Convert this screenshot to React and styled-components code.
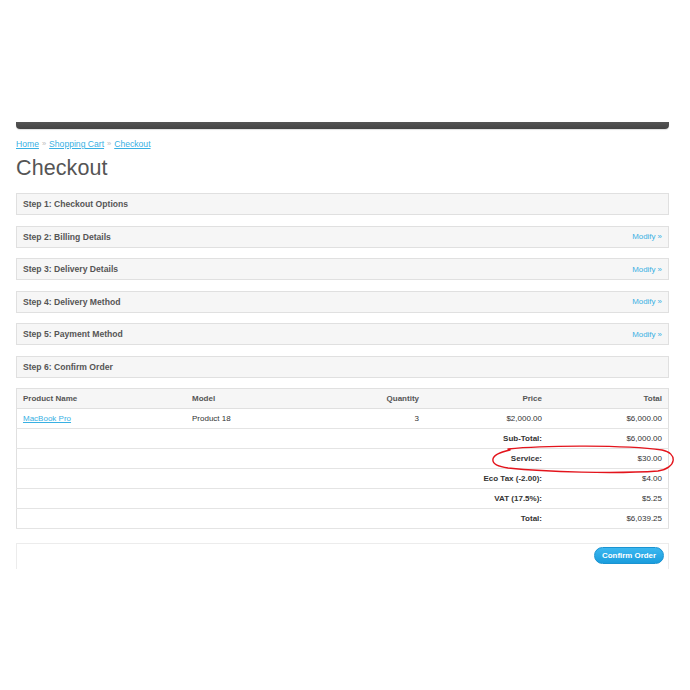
import styled, { createGlobalStyle } from "styled-components";

const GlobalStyle = createGlobalStyle`
  body {
    margin: 0;
    background: #fff;
    font-family: "Liberation Sans", Arial, sans-serif;
    color: #333;
  }
`;

const steps = [
  { title: "Step 1: Checkout Options", modify: false },
  { title: "Step 2: Billing Details", modify: true },
  { title: "Step 3: Delivery Details", modify: true },
  { title: "Step 4: Delivery Method", modify: true },
  { title: "Step 5: Payment Method", modify: true },
  { title: "Step 6: Confirm Order", modify: false },
];

const totals = [
  { label: "Sub-Total:", value: "$6,000.00" },
  { label: "Service:", value: "$30.00" },
  { label: "Eco Tax (-2.00):", value: "$4.00" },
  { label: "VAT (17.5%):", value: "$5.25" },
  { label: "Total:", value: "$6,039.25" },
];

function App() {
  return (
    <>
      <GlobalStyle />
      <Page>
        <TopBar />
        <Breadcrumb>
          <Crumb href="#">Home</Crumb>
          <Sep>»</Sep>
          <Crumb href="#">Shopping Cart</Crumb>
          <Sep>»</Sep>
          <Crumb href="#">Checkout</Crumb>
        </Breadcrumb>
        <Title>Checkout</Title>

        <Steps>
          {steps.map((s) => (
            <Step key={s.title}>
              <StepTitle>{s.title}</StepTitle>
              {s.modify && <Modify href="#">Modify »</Modify>}
            </Step>
          ))}
        </Steps>

        <TableWrap>
          <OrderTable>
            <thead>
              <tr>
                <Th $w={157}>Product Name</Th>
                <Th $w={158}>Model</Th>
                <Th $w={57} $right>Quantity</Th>
                <Th $w={111} $right>Price</Th>
                <Th $right>Total</Th>
              </tr>
            </thead>
            <tbody>
              <tr>
                <Td>
                  <ProductLink href="#">MacBook Pro</ProductLink>
                </Td>
                <Td>Product 18</Td>
                <Td $right>3</Td>
                <Td $right>$2,000.00</Td>
                <Td $right>$6,000.00</Td>
              </tr>
              {totals.map((t) => (
                <tr key={t.label}>
                  <Td colSpan={4} $right $bold>
                    {t.label}
                  </Td>
                  <Td $right>{t.value}</Td>
                </tr>
              ))}
            </tbody>
          </OrderTable>
          <Scribble viewBox="0 0 190 31" width="190" height="31">
            <path
              d="M22 5 C60 1 140 1 176 6 C192 9 191 24 172 27 C130 30 60 28 22 24 C2 21 1 11 24 6"
              fill="none"
              stroke="#e3141c"
              strokeWidth="1.4"
              strokeLinecap="round"
            />
          </Scribble>
        </TableWrap>

        <Buttons>
          <ConfirmButton>Confirm Order</ConfirmButton>
        </Buttons>
      </Page>
    </>
  );
}

const Page = styled.div`
  width: 653px;
  padding: 122px 0 0 16px;
`;

const TopBar = styled.div`
  height: 7px;
  background: linear-gradient(#555, #444);
  border-radius: 0 0 4px 4px;
  box-shadow: 0 1px 1px rgba(0, 0, 0, 0.12);
`;

const Breadcrumb = styled.div`
  margin-top: 9px;
  font-size: 8.6px;
  line-height: 12px;
  display: flex;
  align-items: center;
  gap: 3px;
`;

const Crumb = styled.a`
  color: #38b0e3;
  text-decoration: underline;
`;

const Sep = styled.span`
  color: #bbb;
  font-size: 7.5px;
`;

const Title = styled.h1`
  margin: 4px 0 0;
  font-size: 21.5px;
  font-weight: normal;
  color: #555;
  line-height: 28px;
  letter-spacing: 0.1px;
`;

const Steps = styled.div`
  margin-top: 11px;
  display: flex;
  flex-direction: column;
  gap: 10.6px;
`;

const Step = styled.div`
  height: 22px;
  box-sizing: border-box;
  border: 1px solid #e0e0e0;
  background: #f6f6f6;
  display: flex;
  align-items: center;
  justify-content: space-between;
  padding: 0 6px 0 6px;
`;

const StepTitle = styled.span`
  font-size: 8.6px;
  font-weight: bold;
  color: #555;
`;

const Modify = styled.a`
  font-size: 7.9px;
  color: #38b0e3;
  text-decoration: none;
`;

const TableWrap = styled.div`
  position: relative;
  margin-top: 10px;
`;

const OrderTable = styled.table`
  width: 653px;
  table-layout: fixed;
  border-collapse: collapse;
  border: 1px solid #e0e0e0;
  font-size: 8px;
  tr {
    height: 20px;
  }
`;

const Th = styled.th`
  width: ${(p) => (p.$w ? `${p.$w}px` : "auto")};
  background: #f6f6f6;
  color: #555;
  font-weight: bold;
  text-align: ${(p) => (p.$right ? "right" : "left")};
  padding: 0 6px;
  border-bottom: 1px solid #e0e0e0;
`;

const Td = styled.td`
  color: #333;
  font-weight: ${(p) => (p.$bold ? "bold" : "normal")};
  text-align: ${(p) => (p.$right ? "right" : "left")};
  padding: 0 6px;
  border-bottom: 1px solid #e4e4e4;
`;

const ProductLink = styled.a`
  color: #38b0e3;
  text-decoration: underline;
`;

const Scribble = styled.svg`
  position: absolute;
  left: 470px;
  top: 56px;
  overflow: visible;
`;

const Buttons = styled.div`
  margin-top: 14px;
  height: 26px;
  box-sizing: border-box;
  border: 1px solid #ececec;
  border-bottom: none;
  display: flex;
  justify-content: flex-end;
  align-items: flex-start;
  padding: 3px 4px 0 0;
`;

const ConfirmButton = styled.button`
  height: 17px;
  padding: 0 7px;
  border: 1px solid #1a93d1;
  border-radius: 9px;
  background: linear-gradient(#3bb7f0, #1a9ddd);
  color: #fff;
  font-family: "Liberation Sans", Arial, sans-serif;
  font-size: 7.9px;
  font-weight: bold;
  cursor: pointer;
`;

export default App;
